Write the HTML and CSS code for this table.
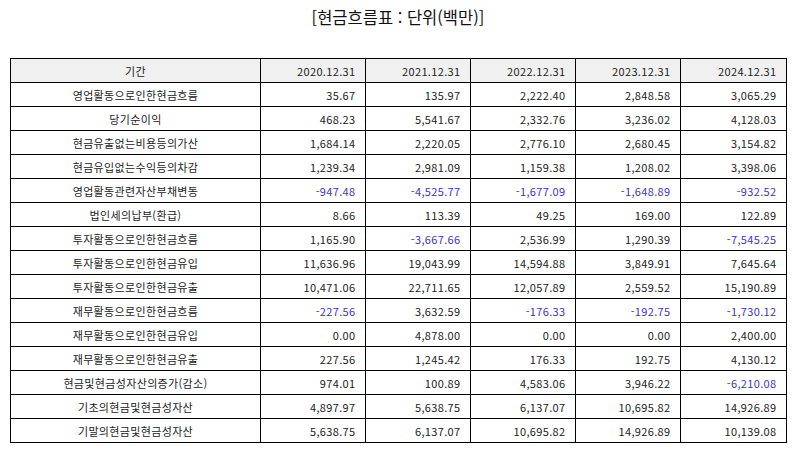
FILE: index.html
```html
<!DOCTYPE html>
<html lang="ko">
<head>
<meta charset="utf-8">
<link rel="stylesheet" href="styles.css">
</head>
<body>
<div class="page">
  <h1 class="title">[현금흐름표 : 단위(백만)]</h1>
  <table class="cf">
    <colgroup>
      <col class="c-label"><col class="c-num"><col class="c-num"><col class="c-num"><col class="c-num"><col class="c-last">
    </colgroup>
    <thead>
      <tr><th class="lbl">기간</th><th>2020.12.31</th><th>2021.12.31</th><th>2022.12.31</th><th>2023.12.31</th><th>2024.12.31</th></tr>
    </thead>
    <tbody>
      <tr><td class="lbl">영업활동으로인한현금흐름</td><td>35.67</td><td>135.97</td><td>2,222.40</td><td>2,848.58</td><td>3,065.29</td></tr>
      <tr><td class="lbl">당기순이익</td><td>468.23</td><td>5,541.67</td><td>2,332.76</td><td>3,236.02</td><td>4,128.03</td></tr>
      <tr><td class="lbl">현금유출없는비용등의가산</td><td>1,684.14</td><td>2,220.05</td><td>2,776.10</td><td>2,680.45</td><td>3,154.82</td></tr>
      <tr><td class="lbl">현금유입없는수익등의차감</td><td>1,239.34</td><td>2,981.09</td><td>1,159.38</td><td>1,208.02</td><td>3,398.06</td></tr>
      <tr><td class="lbl">영업활동관련자산부채변동</td><td class="neg">-947.48</td><td class="neg">-4,525.77</td><td class="neg">-1,677.09</td><td class="neg">-1,648.89</td><td class="neg">-932.52</td></tr>
      <tr><td class="lbl">법인세의납부(환급)</td><td>8.66</td><td>113.39</td><td>49.25</td><td>169.00</td><td>122.89</td></tr>
      <tr><td class="lbl">투자활동으로인한현금흐름</td><td>1,165.90</td><td class="neg">-3,667.66</td><td>2,536.99</td><td>1,290.39</td><td class="neg">-7,545.25</td></tr>
      <tr><td class="lbl">투자활동으로인한현금유입</td><td>11,636.96</td><td>19,043.99</td><td>14,594.88</td><td>3,849.91</td><td>7,645.64</td></tr>
      <tr><td class="lbl">투자활동으로인한현금유출</td><td>10,471.06</td><td>22,711.65</td><td>12,057.89</td><td>2,559.52</td><td>15,190.89</td></tr>
      <tr><td class="lbl">재무활동으로인한현금흐름</td><td class="neg">-227.56</td><td>3,632.59</td><td class="neg">-176.33</td><td class="neg">-192.75</td><td class="neg">-1,730.12</td></tr>
      <tr><td class="lbl">재무활동으로인한현금유입</td><td>0.00</td><td>4,878.00</td><td>0.00</td><td>0.00</td><td>2,400.00</td></tr>
      <tr><td class="lbl">재무활동으로인한현금유출</td><td>227.56</td><td>1,245.42</td><td>176.33</td><td>192.75</td><td>4,130.12</td></tr>
      <tr><td class="lbl">현금및현금성자산의증가(감소)</td><td>974.01</td><td>100.89</td><td>4,583.06</td><td>3,946.22</td><td class="neg">-6,210.08</td></tr>
      <tr><td class="lbl">기초의현금및현금성자산</td><td>4,897.97</td><td>5,638.75</td><td>6,137.07</td><td>10,695.82</td><td>14,926.89</td></tr>
      <tr><td class="lbl">기말의현금및현금성자산</td><td>5,638.75</td><td>6,137.07</td><td>10,695.82</td><td>14,926.89</td><td>10,139.08</td></tr>
    </tbody>
  </table>
</div>
</body>
</html>
```

FILE: styles.css
```css
html, body {
  margin: 0;
  padding: 0;
  background: #ffffff;
}
.page {
  width: 794px;
  height: 452px;
  padding: 0 8px 0 10px;
  box-sizing: border-box;
  font-family: "Noto Sans CJK KR", "Noto Sans", sans-serif;
  color: #222222;
}
.title {
  margin: 0;
  padding-top: 5px;
  height: 58px;
  box-sizing: border-box;
  text-align: center;
  font-size: 16.5px;
  font-weight: normal;
  color: #111111;
  line-height: 24px;
}
.cf {
  border-collapse: collapse;
  width: 776px;
  table-layout: fixed;
  font-size: 11px;
  letter-spacing: 0.35px;
}
.c-label { width: 250px; }
.c-num { width: 105px; }
.c-last { width: 106px; }
.cf tr {
  height: 24px;
}
.cf th, .cf td {
  border: 1px solid #000000;
  height: 24px;
  padding: 0 9.5px 0 4px;
  box-sizing: border-box;
  text-align: right;
  font-weight: normal;
  line-height: 14px;
  white-space: nowrap;
}
.cf th {
  background: #f0f0f0;
}
.cf .lbl {
  text-align: center;
  padding: 0 4px;
}
.cf .neg {
  color: #3a34c8;
}
```
